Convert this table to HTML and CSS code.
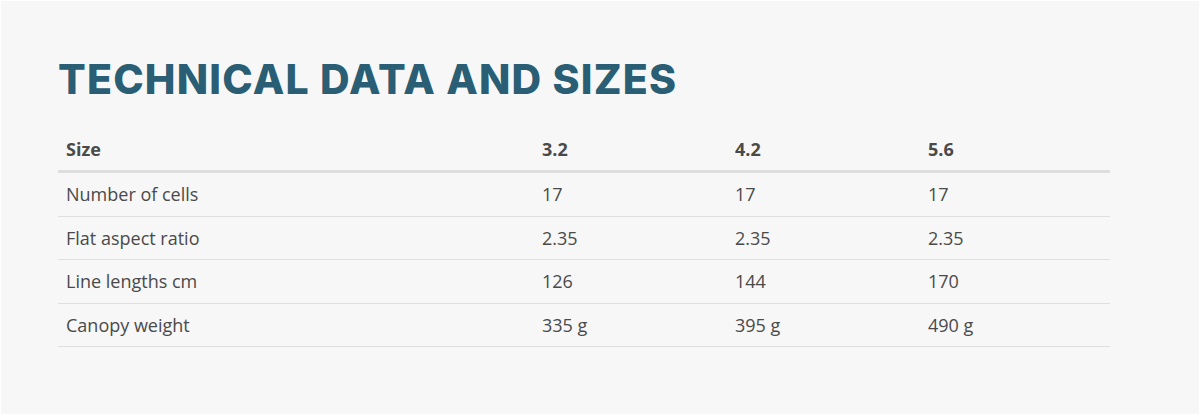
FILE: index.html
```html
<!DOCTYPE html>
<html lang="en">
<head>
<meta charset="utf-8">
<title>Technical data and sizes</title>
<link rel="stylesheet" href="styles.css">
</head>
<body>
<div class="page">
  <section class="specs">
    <h2 class="specs-title">TECHNICAL DATA AND SIZES</h2>
    <table class="specs-table">
      <colgroup>
        <col class="c-label"><col class="c-val"><col class="c-val"><col class="c-last">
      </colgroup>
      <thead>
        <tr><th>Size</th><th>3.2</th><th>4.2</th><th>5.6</th></tr>
      </thead>
      <tbody>
        <tr><td>Number of cells</td><td>17</td><td>17</td><td>17</td></tr>
        <tr><td>Flat aspect ratio</td><td>2.35</td><td>2.35</td><td>2.35</td></tr>
        <tr><td>Line lengths cm</td><td>126</td><td>144</td><td>170</td></tr>
        <tr><td>Canopy weight</td><td>335 g</td><td>395 g</td><td>490 g</td></tr>
      </tbody>
    </table>
  </section>
</div>
</body>
</html>
```
FILE: styles.css
```css
html, body {
  margin: 0;
  padding: 0;
  background: #ffffff;
}
.page {
  margin: 1px 0 0 1px;
  background: #f7f7f7;
  height: 413px;
  box-sizing: border-box;
  padding: 50px 0 0 57px;
}
.specs-title {
  margin: 0 0 21px 0;
  font-family: Inter, "Open Sans", sans-serif;
  font-weight: 800;
  font-size: 41px;
  line-height: 56px;
  color: #295e74;
  letter-spacing: 1.2px;
}
.specs-table {
  width: 1052px;
  border-collapse: collapse;
  table-layout: fixed;
  font-family: "Open Sans", sans-serif;
  font-size: 18px;
  color: #4a4a4a;
}
.c-label { width: 476px; }
.c-val { width: 193px; }
.c-last { width: 190px; }
.specs-table th,
.specs-table td {
  text-align: left;
  padding: 9px 8px;
  line-height: 24.4px;
  border-bottom: 1px solid #dfdfdf;
}
.specs-table th {
  font-weight: 700;
  border-bottom: 3px solid #dedede;
}
```
